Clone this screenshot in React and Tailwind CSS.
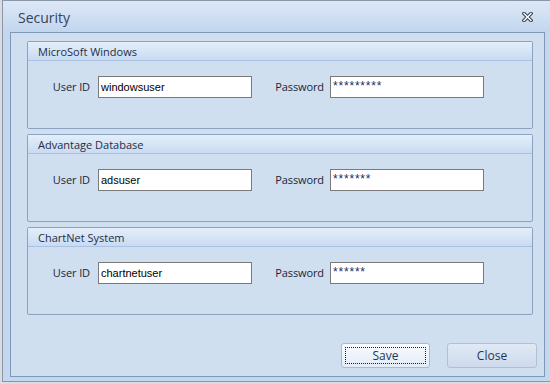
import React from 'react';

const groups = [
    { title: 'MicroSoft Windows', user: 'windowsuser', pass: '*********' },
    { title: 'Advantage Database', user: 'adsuser', pass: '*******' },
    { title: 'ChartNet System', user: 'chartnetuser', pass: '******' },
];

function CloseGlyph() {
    return (
        <svg width="11" height="10" viewBox="0 0 11 10">
            <path d="M2 1.5 L9 8.5 M9 1.5 L2 8.5" stroke="#3a4758" strokeWidth="3.6" strokeLinecap="square" fill="none" />
            <path d="M2 1.5 L9 8.5 M9 1.5 L2 8.5" stroke="#ffffff" strokeWidth="1.4" strokeLinecap="square" fill="none" />
        </svg>
    );
}

function Group({ title, user, pass }) {
    return (
        <div className="h-[88px] border border-[#8ba2c0] rounded-[2px] bg-[#cfdff0]">
            {/* Header band */}
            <div className="h-[19px] pl-[10px] pt-[2px] flex items-center border-b border-[#a9c1e2] bg-gradient-to-b from-[#e4eefa] to-[#c9dbf2] text-[11px] text-[#1e2d44]">
                {title}
            </div>
            <div className="flex items-center pt-[15px]">
                <div className="w-[70px] pr-[8px] text-right text-[11px] text-[#1b2536] tracking-[-0.1px]">User ID</div>
                <div className="w-[154px] h-[22px] border border-[#7a7a7a] bg-white pl-[2px] flex items-center text-[11px] text-black" style={{ fontFamily: '"Liberation Sans", Arial, sans-serif' }}>
                    {user}
                </div>
                <div className="w-[78px] pr-[6px] text-right text-[11px] text-[#1b2536] tracking-[-0.1px]">Password</div>
                <div className="w-[154px] h-[22px] border border-[#7a7a7a] bg-white pl-[2px] flex items-center text-[12px] text-[#1c2c6a] tracking-[0.8px]" style={{ fontFamily: '"Liberation Sans", Arial, sans-serif' }}>
                    <span className="-mt-[3px]">{pass}</span>
                </div>
            </div>
        </div>
    );
}

export default function App() {
    return (
        <div className="w-[550px] h-[384px] bg-[#d9dde3] pl-[2px] pb-[2px] overflow-hidden" style={{ fontFamily: '"Open Sans", "Noto Sans", sans-serif' }}>
            <div className="h-full flex flex-col border-l border-t border-b border-[#8a97a9] bg-[#c4d7ef]">
                {/* Title bar */}
                <div className="h-[31px] shrink-0 flex items-center justify-between pl-[15px] pr-[17px] bg-gradient-to-b from-[#dde8f6] to-[#c2d6ef]">
                    <span className="text-[14px] text-[#33445c] pt-[2px]">Security</span>
                    <CloseGlyph />
                </div>

                {/* Body */}
                <div className="ml-[7px] mr-[5px] h-[345px] border border-[#7e98b8] bg-[#cfdff0] pt-[8px] pl-[16px] pr-[11px] flex flex-col">
                    <div className="flex flex-col gap-[5px]">
                        {groups.map((g) => (
                            <Group key={g.title} {...g} />
                        ))}
                    </div>

                    <div className="flex justify-end gap-[17px] mr-[-4px] mt-[28px]">
                        <button className="w-[89px] h-[25px] p-[3px] rounded-[3px] border border-[#a9bad0] bg-gradient-to-b from-[#f8fbff] to-[#e2ebf6] text-[12px] text-[#1e3556]">
                            <div className="h-full w-full border border-dotted border-[#222] flex items-center justify-center">Save</div>
                        </button>
                        <button className="w-[90px] h-[25px] rounded-[3px] border border-[#b0c1d6] bg-gradient-to-b from-[#e0e9f5] to-[#cedbed] text-[12px] text-[#1e3556] flex items-center justify-center">
                            Close
                        </button>
                    </div>
                </div>
            </div>
        </div>
    );
}
